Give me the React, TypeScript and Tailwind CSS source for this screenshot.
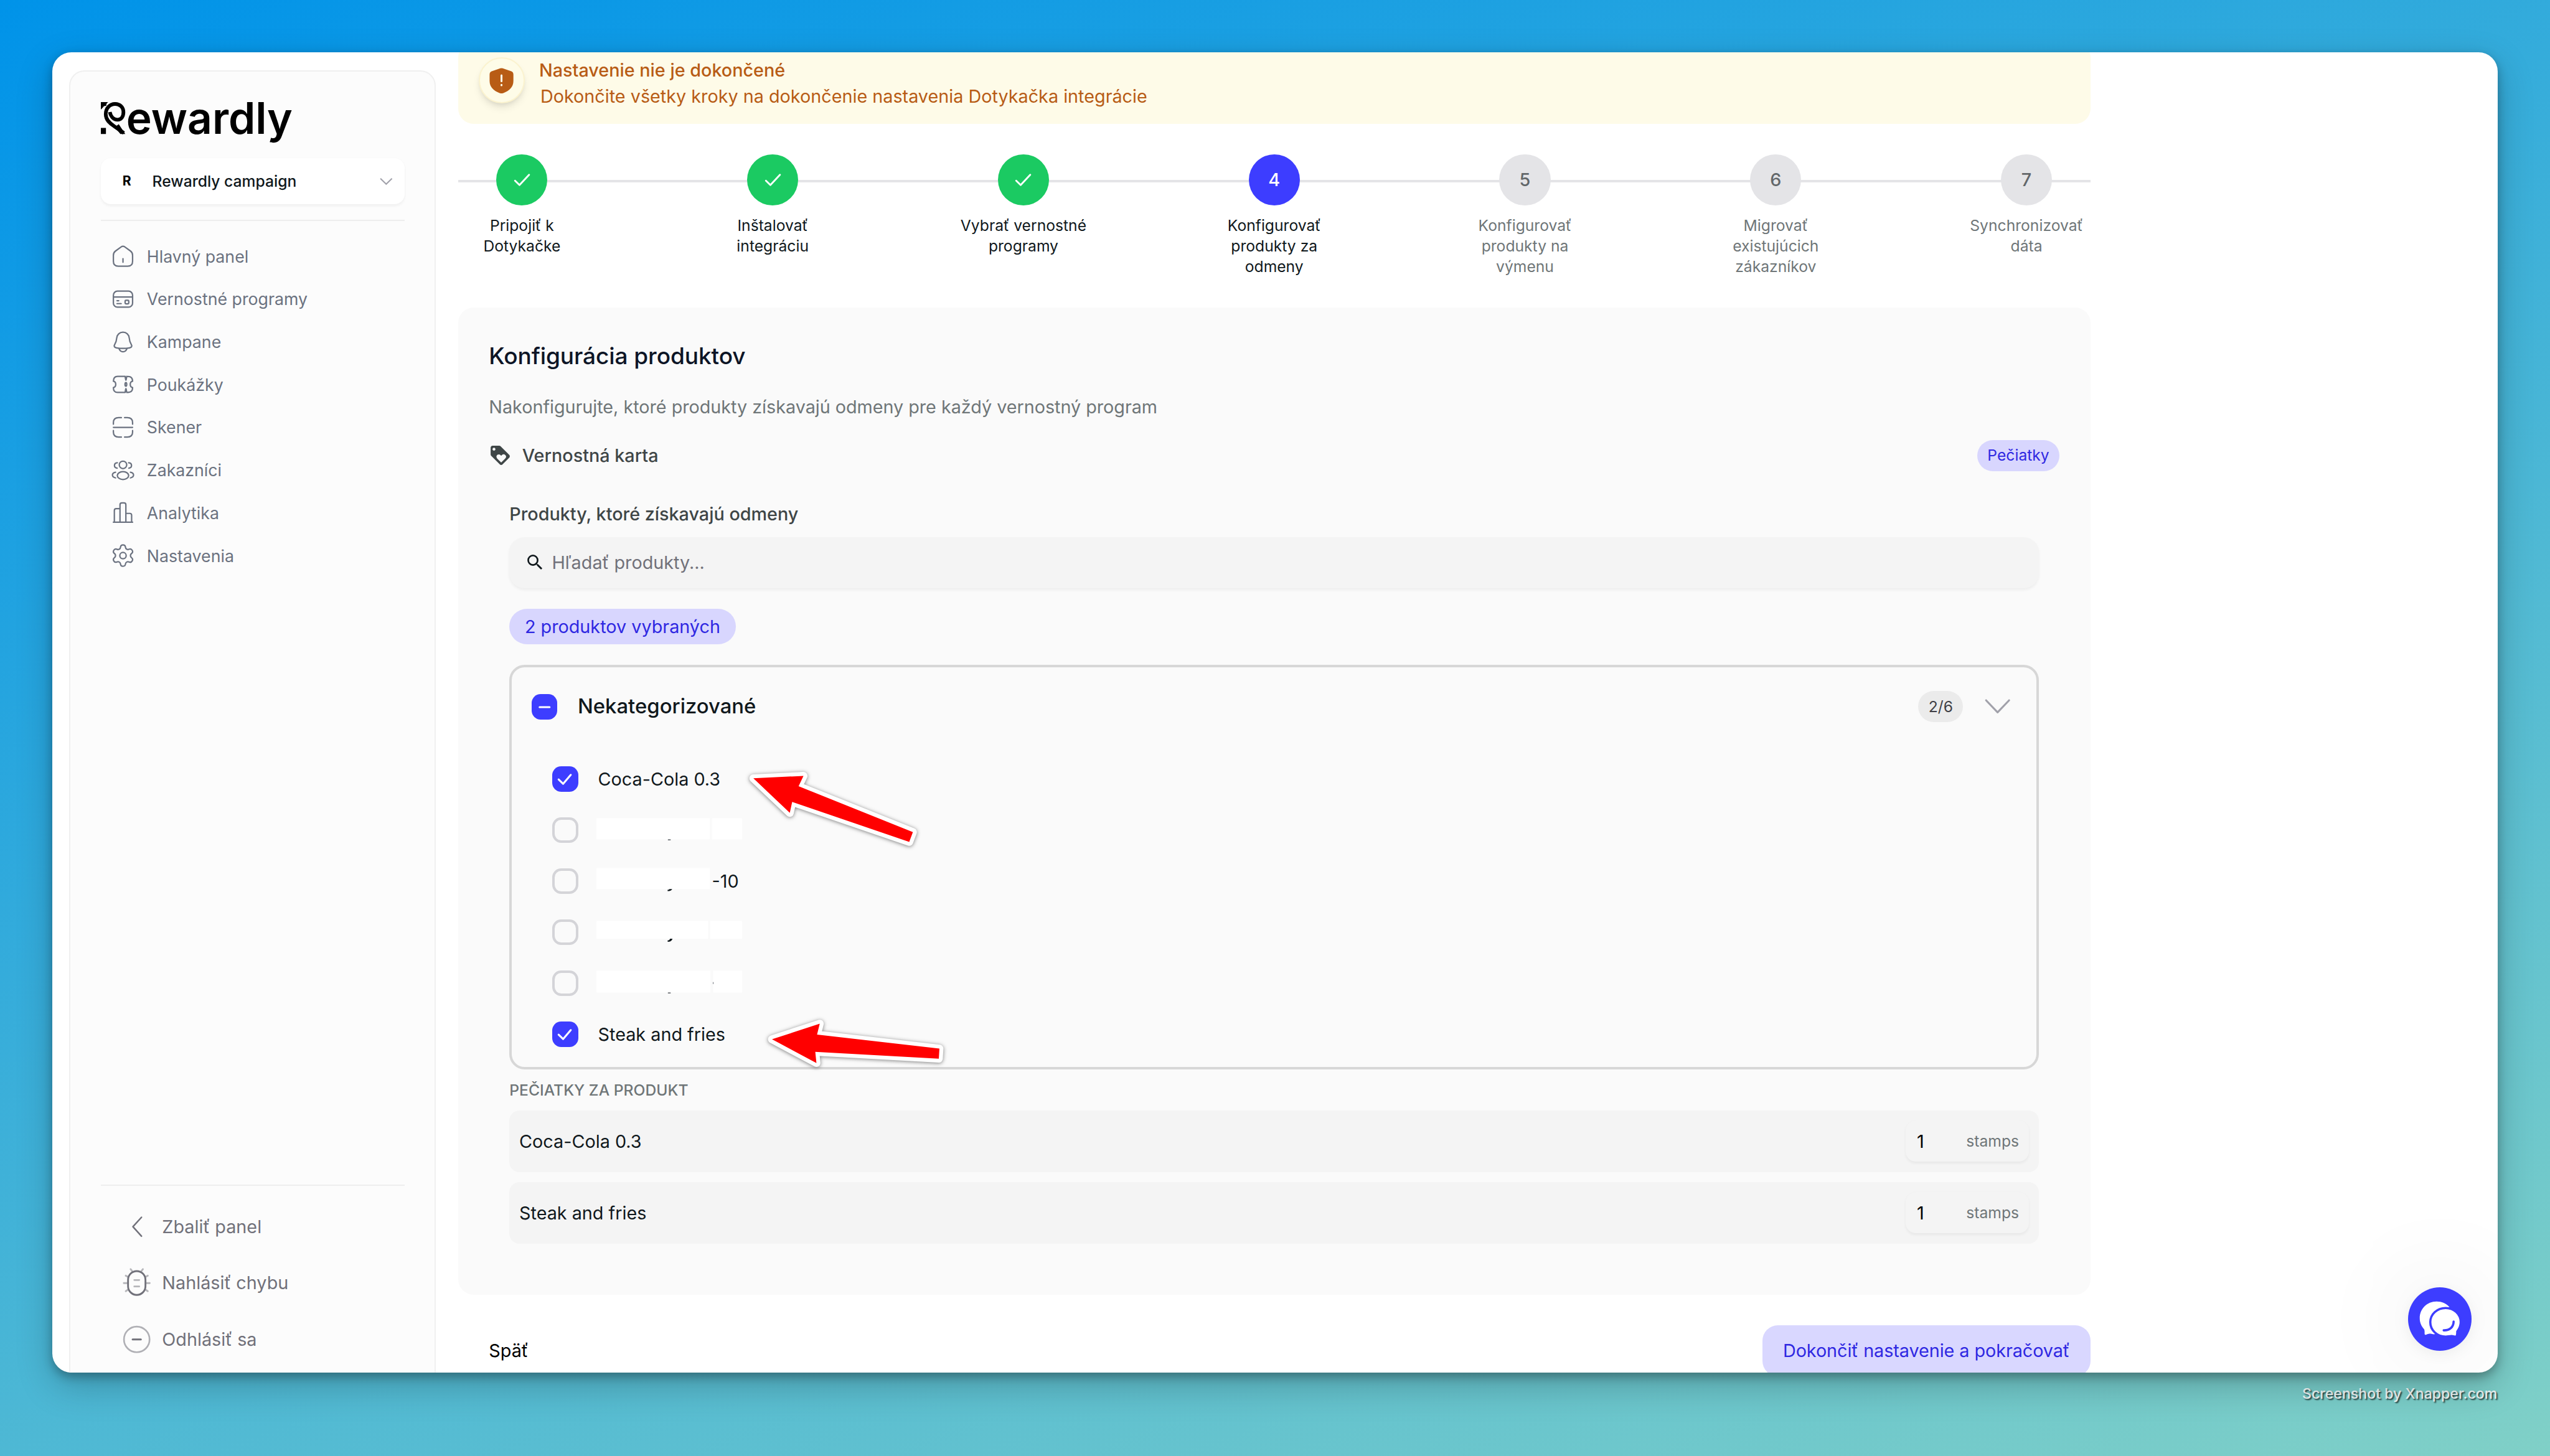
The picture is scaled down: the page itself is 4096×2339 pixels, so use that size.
import type { ReactNode } from 'react';
import { Settings } from 'lucide-react';
import { MdLoyalty, MdSearch } from 'react-icons/md';

interface NavItem {
  label: string;
  icon: ReactNode;
}

interface Step {
  label: string;
  status: 'done' | 'current' | 'upcoming';
}

interface Product {
  name?: string;
  suffix?: string;
  checked: boolean;
  mask?: ReactNode;
}

function NavIcon({ children }: { children: ReactNode }) {
  return (
    <svg
      viewBox="0 0 24 24"
      className="size-5 shrink-0"
      fill="none"
      stroke="currentColor"
      strokeWidth="1.3"
      strokeLinecap="round"
      strokeLinejoin="round"
    >
      {children}
    </svg>
  );
}

const navItems: NavItem[] = [
  {
    label: 'Hlavný panel',
    icon: (
      <NavIcon>
        <path d="M3 11.2c0-1.7.5-2.9 1.8-3.9l5.3-3.9c1.2-.8 2.6-.8 3.8 0l5.3 3.9c1.3 1 1.8 2.2 1.8 3.9v5.6c0 3-1.6 4.6-4.6 4.6H7.600c-3 0-4.600-1.600-4.600-4.600z" />
        <path d="M12 14.300v3.400" />
      </NavIcon>
    ),
  },
  {
    label: 'Vernostné programy',
    icon: (
      <NavIcon>
        <rect x="3" y="4.500" width="18" height="15" rx="3.800" />
        <path d="M3 10h18M6.400 13.500H8M6.400 16.200h3.900" />
        <rect x="14" y="13.100" width="3.400" height="3.300" rx=".8" />
      </NavIcon>
    ),
  },
  {
    label: 'Kampane',
    icon: (
      <NavIcon>
        <path d="M12 2.700c3.200 0 5.700 2.400 5.900 5.600.2 2.400.3 3.300 1.600 5.300 1.400 2.200.7 3.400-1.400 3.800-4 .7-8.200.7-12.200 0-2.100-.4-2.800-1.600-1.400-3.800 1.300-2 1.400-2.900 1.600-5.300.2-3.200 2.700-5.600 5.900-5.600z" />
        <path d="M8.300 18.200c.7 1.900 2 2.900 3.700 2.900s3-1 3.700-2.900" />
      </NavIcon>
    ),
  },
  {
    label: 'Poukážky',
    icon: (
      <NavIcon>
        <path d="M14 4.500H7C4.300 4.500 3 5.800 3 9c1.300.2 2.200 1.500 2.200 3S4.300 14.800 3 15c0 3.200 1.300 4.500 4 4.500h7c.2-1 .3-2.500.7-3.500M14 4.500c.2 1 .3 2.500.7 3.500M15.500 4.500c3.800 0 5.500 1 5.500 4.500-1.300.2-2.200 1.500-2.200 3s.9 2.800 2.200 3c0 3.500-1.700 4.500-5.500 4.500-.2-1-.3-2.500-.7-3.500M15.500 4.500c-.2 1-.3 2.500-.7 3.500" />
        <ellipse cx="14.700" cy="12" rx=".8" ry="1.700" />
      </NavIcon>
    ),
  },
  {
    label: 'Skener',
    icon: (
      <NavIcon>
        <path d="M3 9V7.500C3 4.300 4.800 2.900 8 2.900h2.500M13.500 2.900H16c3.200 0 5 1.400 5 4.600V9M3 15v1.500c0 3.200 1.800 4.600 5 4.600h2.500M13.500 21.100H16c3.200 0 5-1.400 5-4.600V15M3 12h18" />
      </NavIcon>
    ),
  },
  {
    label: 'Zakazníci',
    icon: (
      <NavIcon>
        <circle cx="12" cy="6.900" r="3.500" />
        <ellipse cx="12" cy="16.900" rx="5.300" ry="3.700" />
        <path d="M6.700 4.900c-1.600.1-2.700 1.200-2.700 2.600s1 2.300 2.500 2.500M17.300 4.900c1.600.1 2.700 1.200 2.700 2.600s-1 2.300-2.500 2.500M5 13.800c-1.800.3-2.900 1.400-2.900 2.600 0 1.300 1.100 2.300 2.900 2.700M19 13.800c1.800.3 2.900 1.400 2.900 2.600 0 1.300-1.100 2.300-2.900 2.700" />
      </NavIcon>
    ),
  },
  {
    label: 'Analytika',
    icon: (
      <NavIcon>
        <path d="M3 21h18M3.900 21V10c0-1.200.5-1.700 1.700-1.700H9.200M9.200 21V4.600c0-1.200.5-1.700 1.700-1.700H13c1.200 0 1.700.5 1.700 1.700V21M14.700 12.700h3.700c1.200 0 1.700.5 1.700 1.700V21" />
      </NavIcon>
    ),
  },
  {
    label: 'Nastavenia',
    icon: <Settings className="size-5 shrink-0" strokeWidth={1.3} />,
  },
];

const footerItems: NavItem[] = [
  {
    label: 'Zbaliť panel',
    icon: (
      <svg viewBox="0 0 24 24" className="size-6" fill="none" stroke="currentColor" strokeWidth="1.2" strokeLinecap="round" strokeLinejoin="round">
        <path d="M15.700 4.600 9 12l6.700 7.400" />
      </svg>
    ),
  },
  {
    label: 'Nahlásiť chybu',
    icon: (
      <svg viewBox="0 0 24 24" className="size-6" fill="none" stroke="currentColor" strokeWidth="1.4" strokeLinecap="round">
        <path
          opacity=".5"
          d="M7.200 1.400 8.500 3M16.800 1.400 15.500 3M3.400 6.500 5.200 7.400M20.600 6.500 18.800 7.400M1.900 12.300h3M22.100 12.300h-3M3.400 18.600 5.200 17.400M20.600 18.600 18.800 17.400M10.100 9.900h3.800M10.100 14.900h3.800"
        />
        <rect x="5.200" y="2.900" width="13.600" height="18.600" rx="6.800" />
      </svg>
    ),
  },
  {
    label: 'Odhlásiť sa',
    icon: (
      <svg viewBox="0 0 24 24" className="size-6" fill="none" stroke="currentColor" strokeWidth="1.3" strokeLinecap="round">
        <circle cx="12" cy="12" r="10" opacity=".55" />
        <path d="M8.800 12h6.400" strokeWidth="1.500" />
      </svg>
    ),
  },
];

const steps: Step[] = [
  { label: 'Pripojiť k\nDotykačke', status: 'done' },
  { label: 'Inštalovať\nintegráciu', status: 'done' },
  { label: 'Vybrať vernostné\nprogramy', status: 'done' },
  { label: 'Konfigurovať\nprodukty za\nodmeny', status: 'current' },
  { label: 'Konfigurovať\nprodukty na\nvýmenu', status: 'upcoming' },
  { label: 'Migrovať\nexistujúcich\nzákazníkov', status: 'upcoming' },
  { label: 'Synchronizovať\ndáta', status: 'upcoming' },
];

const products: Product[] = [
  { name: 'Coca-Cola 0.3', checked: true },
  {
    checked: false,
    mask: (
      <>
        <path fill="#fff" d="M0 22.800h185.700v34.800H0zM189 22.800h49.400v34.800H189z" />
        <path fill="#2a2f36" d="M117 57.600h4.500v1.200h-4.500z" />
      </>
    ),
  },
  {
    checked: false,
    suffix: '-10',
    mask: (
      <>
        <path fill="#fff" d="M0 21h185.700v34.400H0z" />
        <path fill="#10181c" d="M119.500 55.400h4.500c-1 2.200-3.500 3.600-7.500 3.100v-2c1.500.2 2.500-.2 3-1.100z" />
      </>
    ),
  },
  {
    checked: false,
    mask: (
      <>
        <path fill="#fff" d="M0 24h182.800v29H0zM186 24h52.400v29H186z" />
        <path fill="#10181c" d="M120.500 53h4c-1 3.500-3.500 5.500-8 4.900v-2.100c2 .2 3.200-.6 4-2.800z" />
      </>
    ),
  },
  {
    checked: false,
    mask: (
      <>
        <path fill="#fff" d="M0 22h186.600v35.600H0zM191 22h47.500v35.600H191z" />
        <path fill="#2a2f36" d="M117 57.600h4.500v1.200h-4.500z" />
        <path fill="#7b8087" d="M190.500 40.500h1.200v3h-1.200z" />
      </>
    ),
  },
  { name: 'Steak and fries', checked: true },
];

const selectedProducts = products.filter((p) => p.checked);

function Logo() {
  return (
    <svg viewBox="32 27 936 201.400" className="block h-8 w-[148.700px] overflow-visible">
      <path d="M32 27h36c-9 6-10 13-9 18-7 1-13 0-17 9l-10 10zM32 154h25v30H32z" />
      <path
        d="M76 76c5 24 20 37 38 38 19 0 29-17 29-37 0-24-17-41-41-41-27 0-46 22-46 50 0 30 22 47 42 60l47 33"
        fill="none"
        stroke="#000"
        strokeWidth="18"
        strokeLinejoin="round"
      />
      <path d="M100 150l20-14 32 48h-24z" />
      <text
        x="157"
        y="184"
        fontSize="214"
        textLength="818"
        lengthAdjust="spacingAndGlyphs"
        className="font-[Inter] font-semibold"
      >
        ewardly
      </text>
    </svg>
  );
}

function Sidebar() {
  return (
    <aside className="ml-[13.100px] mt-[13.800px] flex h-[1060px] w-[286.400px] shrink-0 flex-col rounded-xl border border-[#f0f0f0] bg-[#fcfcfc] px-[23.500px] pt-6 pb-[45.500px]">
      <Logo />
      <button
        type="button"
        className="mt-[11.800px] flex h-9 shrink-0 items-center rounded-lg bg-white pr-[8.500px] pl-[17px] text-[#10181c] shadow-xs"
      >
        <span className="w-[23.300px] text-left text-[10.300px] font-bold text-black">R</span>
        <span className="flex-1 text-left text-xs font-medium">Rewardly campaign</span>
        <svg viewBox="0 0 12 12" className="size-3" fill="none" stroke="#a1a1aa" strokeWidth="1">
          <path d="M1.500 3.800 6 8.200l4.500-4.400" />
        </svg>
      </button>
      <div className="mt-3 h-px shrink-0 bg-[#eeeeee]" />
      <nav className="mt-[11px] flex flex-1 flex-col text-[#6b7280]">
        {navItems.map((item) => (
          <a key={item.label} className="flex h-[33.400px] items-center gap-[8.700px] pl-[7.400px] text-[13px]">
            {item.icon}
            {item.label}
          </a>
        ))}
      </nav>
      <div className="h-px shrink-0 bg-[#eeeeee]" />
      <div className="flex flex-col pt-[10px] text-[#71717a]">
        {footerItems.map((item) => (
          <a key={item.label} className="flex h-11 items-center gap-2 pl-4 text-sm">
            {item.icon}
            {item.label}
          </a>
        ))}
      </div>
    </aside>
  );
}

function SetupBanner() {
  return (
    <div className="flex h-16 items-start gap-[11.200px] rounded-xl bg-[#fefbe8] px-4 pt-3 text-sm text-[#b85c15]">
      <div className="flex size-9 items-center justify-center rounded-full border border-[#fbf3cf] bg-[#fefce8] shadow-md shadow-black/10">
        <svg viewBox="0 0 20 20" className="size-5">
          <path
            d="M10 .2c.7 0 1.300.2 2 .5l5.300 1.800c1.400.5 2 1.200 2 2.700v5c0 5-3.500 7.800-7.800 9.500-1 .4-2 .4-3 0C4.200 18 .7 15.200.7 10.200v-5c0-1.500.6-2.200 2-2.700L8 .7C8.700.4 9.300.2 10 .2z"
            fill="#b85c15"
          />
          <path d="M10 5.800v4.600M10 13.300v.3" stroke="#fefce8" strokeWidth="1.500" strokeLinecap="round" />
        </svg>
      </div>
      <div>
        <p className="font-medium">Nastavenie nie je dokončené</p>
        <p className="pl-px">Dokončite všetky kroky na dokončenie nastavenia Dotykačka integrácie</p>
      </div>
    </div>
  );
}

const circleStyles = {
  done: 'bg-[#1bca62] text-white',
  current: 'bg-[#3d3dff] text-white',
  upcoming: 'bg-[#e4e4e7] text-[#62676a]',
};

function Stepper() {
  return (
    <div className="relative mt-[23.600px]">
      <div className="absolute inset-x-0 top-5 h-[2px] bg-[#e4e4e7]" />
      <ol className="relative flex justify-between">
        {steps.map((step, i) => (
          <li key={step.label} className="flex w-[99.600px] flex-col items-center">
            <span
              className={`flex size-10 items-center justify-center rounded-full text-sm font-medium ${circleStyles[step.status]}`}
            >
              {step.status === 'done' ? (
                <svg viewBox="0 0 20 20" className="size-5" fill="none" stroke="currentColor" strokeWidth="1.400" strokeLinecap="round" strokeLinejoin="round">
                  <path d="M4.500 10.800 8 14.200l7.500-8" />
                </svg>
              ) : (
                i + 1
              )}
            </span>
            <span
              className={`mt-[7.600px] text-center text-xs whitespace-pre ${
                step.status === 'upcoming' ? 'text-[#6f7678]' : 'text-[#10181c]'
              }`}
            >
              {step.label}
            </span>
          </li>
        ))}
      </ol>
    </div>
  );
}

function Checkbox({ state }: { state: 'checked' | 'mixed' | 'empty' }) {
  if (state === 'empty') {
    return <span className="size-5 shrink-0 rounded-[7px] border-2 border-[#d4d4d8]" />;
  }
  return (
    <span className="flex size-5 shrink-0 items-center justify-center rounded-[7px] bg-[#3d3dff]">
      <svg viewBox="0 0 20 20" className="size-5" fill="none" stroke="#fff" strokeWidth="1.500" strokeLinecap="round" strokeLinejoin="round">
        {state === 'mixed' ? <path d="M6.200 10.200h7.800" /> : <path d="M5 10.300 8.500 13.700l6-7" />}
      </svg>
    </span>
  );
}

function ProductList() {
  return (
    <div className="mt-4 h-[316px] rounded-xl border-2 border-[#d7d7d7]">
      <div className="flex h-[61px] items-center pr-[18.500px] pl-[15.600px]">
        <Checkbox state="mixed" />
        <span className="ml-[15.800px] flex-1 text-base font-medium text-[#10181c]">Nekategorizované</span>
        <span className="flex h-6 items-center rounded-full bg-[#ebebeb] px-2 text-xs text-[#3f3f46]">2/6</span>
        <svg viewBox="0 0 24 24" className="ml-[14.800px] size-6" fill="none" stroke="#a1a1aa" strokeWidth="1.500" strokeLinecap="round" strokeLinejoin="round">
          <path d="M3 7.300 12 16.700l9-9.400" />
        </svg>
      </div>
      <ul className="pt-[6px] pl-[31.700px]">
        {products.map((product, i) => (
          <li key={i} className="flex h-[39.900px] items-center gap-[15.600px]">
            <Checkbox state={product.checked ? 'checked' : 'empty'} />
            {product.name && <span className="text-sm text-[#10181c]">{product.name}</span>}
            {product.mask && (
              <span className="relative -ml-[1.300px] flex h-10 w-[114px] items-center">
                <svg viewBox="0 0 239 84" className="absolute top-0 left-0 h-[40.100px] w-[114.100px]">
                  {product.mask}
                </svg>
                {product.suffix && <span className="pl-[90.300px] text-sm text-[#10181c]">{product.suffix}</span>}
              </span>
            )}
          </li>
        ))}
      </ul>
    </div>
  );
}

function StampRow({ name }: { name?: string }) {
  return (
    <div className="flex h-12 items-center rounded-lg bg-[#f4f4f4] pr-2 pl-[7.700px] text-sm">
      <span className="flex-1 text-[#10181c]">{name}</span>
      <span className="flex h-8 w-24 items-center justify-between rounded-lg bg-[#f4f4f4] pr-[7.700px] pl-[8.500px] text-black shadow-xs">
        1<span className="text-xs text-[#6f7678]">stamps</span>
      </span>
    </div>
  );
}

function ProductConfigCard() {
  return (
    <section className="mt-6 h-[771.500px] rounded-xl bg-[#fafafa] p-6">
      <h2 className="text-lg leading-7 font-medium tracking-[-0.002em] text-[#0d1526]">Konfigurácia produktov</h2>
      <p className="mt-[15.800px] text-sm tracking-[-0.001em] text-[#6f7678]">
        Nakonfigurujte, ktoré produkty získavajú odmeny pre každý vernostný program
      </p>
      <div className="mt-4 flex h-6 items-center gap-2 text-[#3f4647]">
        <MdLoyalty className="size-[18px]" />
        <span className="flex-1 text-sm font-medium">Vernostná karta</span>
        <span className="flex h-6 items-center rounded-full bg-[#d8d6fe] px-2 text-xs text-[#2f28e2]">Pečiatky</span>
      </div>
      <div className="px-4 pt-[23.700px]">
        <p className="text-sm font-medium text-[#3f4647]">Produkty, ktoré získavajú odmeny</p>
        <div className="mt-2 flex h-10 items-center gap-[5.200px] rounded-xl bg-[#f4f4f4] px-3 text-sm text-[#71717a] shadow-xs">
          <MdSearch className="size-4 text-[#10181c]" />
          Hľadať produkty...
        </div>
        <span className="mt-4 flex h-7 w-fit items-center rounded-full bg-[#d8d6fe] px-3 text-sm text-[#2f28e2]">
          2 produktov vybraných
        </span>
        <ProductList />
        <p className="mt-2 text-xs font-medium text-[#6f7678]">PEČIATKY ZA PRODUKT</p>
        <div className="mt-2 flex flex-col gap-2">
          {selectedProducts.map((product) => (
            <StampRow key={product.name} name={product.name} />
          ))}
        </div>
      </div>
    </section>
  );
}

function ChatLauncher() {
  return (
    <button
      type="button"
      className="absolute right-[20px] bottom-[17px] size-[49.800px] rounded-full bg-[#3d3dff] shadow-[0_2px_10px_rgba(0,0,0,0.06),0_0_80px_rgba(0,0,0,0.12)]"
    >
      <svg viewBox="660 168 313 314" className="size-full">
        <path
          d="M800 238c-47 0-83 36-83 82 0 22 8 40 22 55 3 8 2 18 2 22 0 5 5 6 9 4 8-4 18-6 27-3 8 2 12 2 16 0l70-133c-16-17-38-27-63-27z"
          fill="#fff"
        />
        <path
          d="M845 270c-42 0-76 30-76 70s34 71 76 71c10 0 19-3 29-3 7 0 14 4 19 4 8-1 9-12 9-26 12-16 17-28 17-46 0-40-34-70-74-70z"
          fill="#fff"
          stroke="#3d3dff"
          strokeWidth="11"
        />
        <path d="M835 380c29 1 48-15 49-43" fill="none" stroke="#3d3dff" strokeWidth="11" strokeLinecap="round" />
      </svg>
    </button>
  );
}

// Hand-placed pointers on top of the page
function Arrows() {
  return (
    <svg
      viewBox="0 0 4000 2160"
      className="pointer-events-none absolute top-0 left-0 h-[1031.400px] w-[1910px]"
      fill="red"
      strokeLinejoin="round"
    >
      <g transform="translate(-86 -86)" className="drop-shadow-[0_1px_3px_rgba(0,0,0,0.5)]">
        <path
          d="M1233 1274 1315 1270 1307 1287 1494 1362 1488 1378 1296.500 1312.600 1292.600 1330.500z"
          stroke="#fff"
          strokeWidth="13"
          paintOrder="stroke"
        />
        <path
          d="M1263.500 1701 1341.600 1675.500 1337.200 1693.400 1537.400 1716.200 1536.400 1732.700 1334.300 1721.500 1336.200 1739.800z"
          stroke="#fff"
          strokeWidth="13"
          paintOrder="stroke"
        />
      </g>
    </svg>
  );
}

export default function App() {
  return (
    <div className="h-screen w-screen overflow-hidden bg-[linear-gradient(160deg,#0093e9_0%,#80d0c7_100%)] font-[Inter,sans-serif]">
      <div className="h-[1137px] w-[1992px] p-[41.070px] [zoom:2.0561]">
        <div className="relative flex h-[1031.400px] w-[1910px] overflow-hidden rounded-[15px] bg-white shadow-[0_3px_8px_rgba(0,0,0,0.28),0_10px_28px_rgba(0,0,0,0.22)]">
          <Sidebar />
          <main className="-mt-[8.100px] ml-[17.400px] w-[1275px] shrink-0">
            <SetupBanner />
            <Stepper />
            <ProductConfigCard />
            <div className="mt-[23.600px] flex items-center justify-between text-sm">
              <button type="button" className="pl-6 text-black">
                Späť
              </button>
              <button type="button" className="h-10 rounded-xl bg-[#d9d7ff] px-4 tracking-[-0.002em] text-[#2f28e2]">
                Dokončiť nastavenie a pokračovať
              </button>
            </div>
          </main>
          <ChatLauncher />
          <Arrows />
        </div>
        <p className="mt-[8.500px] text-right text-[11.250px] leading-4 font-medium text-white/90 [text-shadow:1px_1px_1px_rgba(0,0,0,0.7)]">
          Screenshot by Xnapper.com
        </p>
      </div>
    </div>
  );
}
